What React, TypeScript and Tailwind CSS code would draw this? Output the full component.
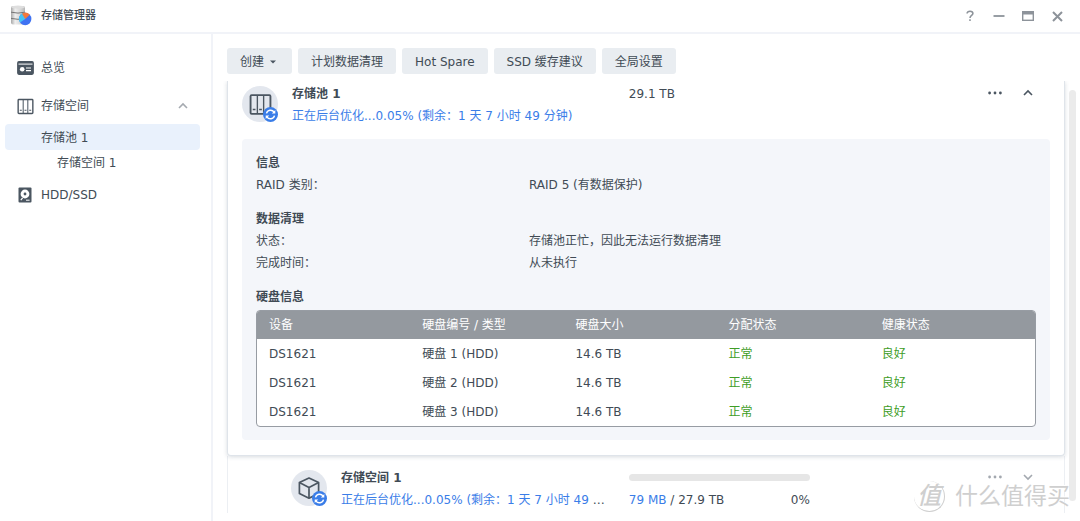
import type { ReactNode } from "react";

const disks = [
  { device: "DS1621", name: "硬盘 1 (HDD)", size: "14.6 TB", allocation: "正常", health: "良好" },
  { device: "DS1621", name: "硬盘 2 (HDD)", size: "14.6 TB", allocation: "正常", health: "良好" },
  { device: "DS1621", name: "硬盘 3 (HDD)", size: "14.6 TB", allocation: "正常", health: "良好" },
];

const toolbar = ["计划数据清理", "Hot Spare", "SSD 缓存建议", "全局设置"];

function AppLogo() {
  return (
    <svg width="22" height="22" viewBox="0 0 22 22" className="shrink-0">
      <defs>
        <linearGradient id="metal" x1="0" x2="1">
          <stop offset="0" stopColor="#a9a9a9" />
          <stop offset="0.3" stopColor="#eeeeee" />
          <stop offset="0.7" stopColor="#d6d6d6" />
          <stop offset="1" stopColor="#b4b4b4" />
        </linearGradient>
      </defs>
      <rect x="1" y="1" width="14" height="18.5" rx="2" fill="url(#metal)" />
      <ellipse cx="8" cy="2.2" rx="6.6" ry="1.6" fill="#dedede" />
      <path d="M1 7.2q7 1.8 14 0M1 13.4q7 1.8 14 0" stroke="#777" strokeWidth="1" fill="none" />
      <circle cx="15.2" cy="14" r="6.2" fill="#3f72f2" />
      <path d="M15.2 14V7.8a6.2 6.2 0 0 0-5.2 9.6z" fill="#45c3f5" />
      <path d="M15.2 14l-3.2-5.3a6.2 6.2 0 0 1 7.8 1.1z" fill="#f4783c" />
    </svg>
  );
}

function OverviewIcon() {
  return (
    <svg width="17" height="14" viewBox="0 0 17 14">
      <rect x="0.9" y="0.9" width="15.2" height="12.2" rx="1" fill="#4b5661" stroke="#4b5661" strokeWidth="1.6" />
      <path d="M1.5 3.1h14" stroke="#fff" strokeWidth="1" />
      <circle cx="5.2" cy="8.2" r="2.3" fill="#fff" />
      <path d="M9 7h5M9 9.600h5" stroke="#fff" strokeWidth="1.2" />
    </svg>
  );
}

function BaysIcon({ size }: { size: number }) {
  return (
    <svg width={size} height={size} viewBox="0 0 22 22" fill="none" stroke="#4b5661">
      <rect x="1.5" y="2" width="19" height="18" rx="1" strokeWidth="1.8" />
      <path d="M8 2v18M14 2v18" strokeWidth="1.3" />
      <path d="M3.6 15.8h2.6M9.7 15.8h2.6M15.8 15.8h2.6" strokeWidth="1.4" />
    </svg>
  );
}

function DriveIcon() {
  return (
    <svg width="14" height="16" viewBox="0 0 14 16">
      <rect x="0.5" y="0.5" width="13" height="15" rx="1" fill="#4b5661" />
      <circle cx="7" cy="7" r="4.4" fill="#fff" />
      <circle cx="7" cy="7" r="1.4" fill="#4b5661" />
      <path d="M2.8 13.2l1.800-2.4" stroke="#fff" strokeWidth="1.2" />
      <path d="M8 13.2h3.6" stroke="#fff" strokeWidth="1" />
    </svg>
  );
}

function CubeIcon() {
  return (
    <svg width="24" height="24" viewBox="0 0 24 24" fill="none" stroke="#4b5661" strokeWidth="1.7" strokeLinejoin="round">
      <path d="M12 2l9.6 4.6v10.8L12 22.2l-9.6-4.8V6.6z" />
      <path d="M2.4 6.6L12 11.4l9.6-4.8M12 11.4v10.8" />
    </svg>
  );
}

function Chevron({ up, color }: { up?: boolean; color: string }) {
  return (
    <svg width="12" height="8" viewBox="0 0 12 8" fill="none" stroke={color} strokeWidth="1.6">
      <path d={up ? "M2 6l4-4 4 4" : "M2 2l4 4 4-4"} />
    </svg>
  );
}

function Dots({ color }: { color: string }) {
  return (
    <svg width="14" height="4" viewBox="0 0 14 4" fill={color}>
      <circle cx="1.6" cy="2" r="1.4" />
      <circle cx="7" cy="2" r="1.4" />
      <circle cx="12.4" cy="2" r="1.4" />
    </svg>
  );
}

function StatusIcon({ children }: { children: ReactNode }) {
  return (
    <div className="relative flex size-9 shrink-0 items-center justify-center rounded-full bg-[#e3e7ee]">
      {children}
      <svg width="15" height="15" viewBox="0 0 15 15" className="absolute right-0 bottom-0">
        <circle cx="7.5" cy="7.5" r="7.5" fill="#3a7de8" />
        <g fill="none" stroke="#fff" strokeWidth="1.4">
          <path d="M3.5 6.4a4.2 4.2 0 0 1 7.6-1.3" />
          <path d="M11.5 8.6a4.2 4.2 0 0 1-7.6 1.3" />
        </g>
        <path d="M12.3 3v3.5H8.8zM2.7 12V8.5h3.5z" fill="#fff" />
      </svg>
    </div>
  );
}

function Row({ title, value }: { title: string; value: string }) {
  return (
    <div className="grid grid-cols-[35%_1fr] leading-[22px]">
      <dt>{title}</dt>
      <dd>{value}</dd>
    </div>
  );
}

function TitleBar() {
  return (
    <header className="flex h-[34px] shrink-0 items-center border-b-2 border-[#f1f3f8] pr-4 pl-[10px]">
      <AppLogo />
      <h1 className="ml-[9px] flex-1 text-[11px] font-medium">存储管理器</h1>
      <div className="flex items-center gap-[15px]">
        <button aria-label="帮助" className="flex size-[14px] items-center justify-center">
          <svg width="10" height="12" viewBox="0 0 10 14" fill="none" stroke="#8d939a" strokeWidth="1.8">
            <path d="M1.6 4.2C1.6 2.4 3 1.4 5 1.4s3.4 1 3.4 2.8C8.4 6.4 5 6.4 5 9.2" />
            <path d="M5 10.8v2" />
          </svg>
        </button>
        <button aria-label="最小化" className="flex size-[14px] items-center justify-center">
          <svg width="12" height="2" viewBox="0 0 12 2">
            <path d="M0.5 1h11" stroke="#8d939a" strokeWidth="1.8" />
          </svg>
        </button>
        <button aria-label="最大化" className="flex size-[14px] items-center justify-center">
          <svg width="12" height="10" viewBox="0 0 12 10" fill="none" stroke="#8d939a">
            <rect x="0.7" y="0.7" width="10.6" height="8.6" strokeWidth="1.4" />
            <path d="M0 2h12" strokeWidth="3" />
          </svg>
        </button>
        <button aria-label="关闭" className="flex size-[14px] items-center justify-center">
          <svg width="11" height="11" viewBox="0 0 11 11" stroke="#8d939a" strokeWidth="2">
            <path d="M1 1l9 9M10 1l-9 9" />
          </svg>
        </button>
      </div>
    </header>
  );
}

function Sidebar() {
  return (
    <nav className="flex w-[213px] shrink-0 flex-col border-r-2 border-[#f1f3f8] pt-4 pr-[11px] pl-[5px]">
      <a href="#overview" className="flex h-[34px] items-center pt-[2px] pl-3">
        <span className="w-6"><OverviewIcon /></span>
        总览
      </a>
      <a href="#storage" className="mt-1 flex h-[34px] items-center pt-[2px] pl-3">
        <span className="w-6"><BaysIcon size={17} /></span>
        <span className="flex-1">存储空间</span>
        <span className="mr-[11px]"><Chevron up color="#a5aab0" /></span>
      </a>
      <a href="#pool" aria-current="page" className="mt-[2px] flex h-[26px] items-center rounded bg-[#e9f1fc] pt-[2px] pl-9">
        存储池 1
      </a>
      <a href="#volume" className="flex h-[26px] items-center pl-[52px]">
        存储空间 1
      </a>
      <a href="#drives" className="mt-[1px] flex h-[34px] items-center pt-[2px] pl-[13px]">
        <span className="w-[23px]"><DriveIcon /></span>
        HDD/SSD
      </a>
    </nav>
  );
}

function DiskTable() {
  return (
    <div className="overflow-hidden rounded border border-[#979ca3] bg-white">
      <table className="w-full table-fixed text-left">
        <colgroup>
          <col />
          <col />
          <col />
          <col />
          <col />
          <col className="w-3" />
        </colgroup>
        <thead className="bg-[#94999f] text-white">
          <tr className="h-7">
            <th className="pl-3 font-normal">设备</th>
            <th className="pl-3 font-normal">硬盘编号 / 类型</th>
            <th className="pl-3 font-normal">硬盘大小</th>
            <th className="pl-3 font-normal">分配状态</th>
            <th colSpan={2} className="pl-3 font-normal">健康状态</th>
          </tr>
        </thead>
        <tbody>
          {disks.map((disk) => (
            <tr key={disk.name} className="h-[29px]">
              <td className="pl-3">{disk.device}</td>
              <td className="pl-3">{disk.name}</td>
              <td className="pl-3">{disk.size}</td>
              <td className="pl-3 text-[#3f9d27]">{disk.allocation}</td>
              <td colSpan={2} className="pl-3 text-[#3f9d27]">{disk.health}</td>
            </tr>
          ))}
        </tbody>
      </table>
    </div>
  );
}

function StoragePool() {
  return (
    <section className="relative rounded-b border-x border-b border-[#dfe4ea] bg-white px-[14px] pt-[5px] pb-[15px] shadow-[0_1px_4px_rgba(60,80,100,0.2)]">
      <div className="grid grid-cols-[calc(48%-1px)_181px_1fr]">
        <div className="flex gap-[14px]">
          <StatusIcon><BaysIcon size={23} /></StatusIcon>
          <div className="-mt-[3px] leading-[22px]">
            <h2 className="font-bold">存储池 1</h2>
            <p className="text-[#3a7de8]">正在后台优化...0.05% (剩余：1 天 7 小时 49 分钟)</p>
          </div>
        </div>
        <p className="-mt-[3px] leading-[22px]">29.1 TB</p>
        <div className="flex h-[14px] items-center justify-end gap-5 pr-4">
          <button aria-label="更多"><Dots color="#4b5661" /></button>
          <button aria-label="收起"><Chevron up color="#4b5661" /></button>
        </div>
      </div>

      <div className="mt-3 rounded bg-[#f4f6fa] px-[14px] pt-[13px] pb-[13px]">
        <h3 className="leading-[22px] font-bold">信息</h3>
        <dl>
          <Row title="RAID 类别：" value="RAID 5 (有数据保护)" />
        </dl>
        <h3 className="mt-3 leading-[22px] font-bold">数据清理</h3>
        <dl>
          <Row title="状态：" value="存储池正忙，因此无法运行数据清理" />
          <Row title="完成时间：" value="从未执行" />
        </dl>
        <h3 className="mt-3 mb-[2px] leading-[22px] font-bold">硬盘信息</h3>
        <DiskTable />
      </div>
    </section>
  );
}

function Volume() {
  return (
    <section className="flex-1 border-x border-[#eceff3] px-[14px] pt-[14px]">
      <div className="grid grid-cols-[calc(48%-1px)_181px_1fr]">
        <div className="flex min-w-0 gap-[14px] pr-5 pl-[49px]">
          <StatusIcon><CubeIcon /></StatusIcon>
          <div className="-mt-[3px] min-w-0 leading-[22px]">
            <h2 className="font-bold">存储空间 1</h2>
            <p className="truncate">
              <span className="text-[#3a7de8]">正在后台优化...0.05% (剩余：1 天 7 小时 49 分钟)</span>
            </p>
          </div>
        </div>
        <div>
          <div role="progressbar" aria-label="已用容量" aria-valuenow={0} className="mt-1 h-[7px] rounded-full bg-[#e6e6e6]" />
          <p className="mt-2 flex justify-between leading-[22px]">
            <span><span className="text-[#3a7de8]">79 MB</span> / 27.9 TB</span>
            <span>0%</span>
          </p>
        </div>
        <div className="flex h-[14px] items-center justify-end gap-5 pr-4">
          <button aria-label="更多"><Dots color="#a3a8af" /></button>
          <button aria-label="展开"><Chevron color="#a3a8af" /></button>
        </div>
      </div>
    </section>
  );
}

function Watermark() {
  return (
    <div className="pointer-events-none absolute right-[10px] bottom-[9px] flex items-center gap-[10px] text-[#cfcfcf] [text-shadow:-1px_-1px_0_#fff]">
      <span className="flex size-[31px] items-center justify-center rounded-full border-r border-b border-[#cfcfcf] text-[24px] leading-none font-medium italic">
        值
      </span>
      <span className="text-[23px] leading-[32px]">什么值得买</span>
    </div>
  );
}

export default function App() {
  return (
    <div className="relative flex h-screen flex-col overflow-hidden bg-white font-['DejaVu_Sans','Noto_Sans_CJK_SC',sans-serif] text-[12px] leading-4 text-[#414b55]">
      <TitleBar />
      <div className="flex min-h-0 flex-1">
        <Sidebar />
        <main className="flex min-w-0 flex-1 flex-col pt-[14px] pb-2 pl-[14px]">
          <div className="flex gap-[6px]">
            <button className="flex h-[26px] items-center gap-[6px] rounded-[3px] bg-[#e9edf1] pt-[2px] pr-4 pl-[13px]">
              创建
              <svg width="6" height="4" viewBox="0 0 6 4" fill="#4b5661">
                <path d="M0 0.5h6L3 3.5z" />
              </svg>
            </button>
            {toolbar.map((label) => (
              <button key={label} className="h-[26px] rounded-[3px] bg-[#e9edf1] px-[13px] pt-[2px]">
                {label}
              </button>
            ))}
          </div>
          <div className="mt-[7px] flex min-h-0 flex-1">
            <div className="-ml-2 flex min-w-0 flex-1 flex-col overflow-hidden pr-1 pl-2">
              <StoragePool />
              <Volume />
            </div>
            <div className="mt-[9px] mr-1 mb-3 w-[7px] rounded-full bg-[#ebebeb]" />
          </div>
        </main>
      </div>
      <Watermark />
    </div>
  );
}
